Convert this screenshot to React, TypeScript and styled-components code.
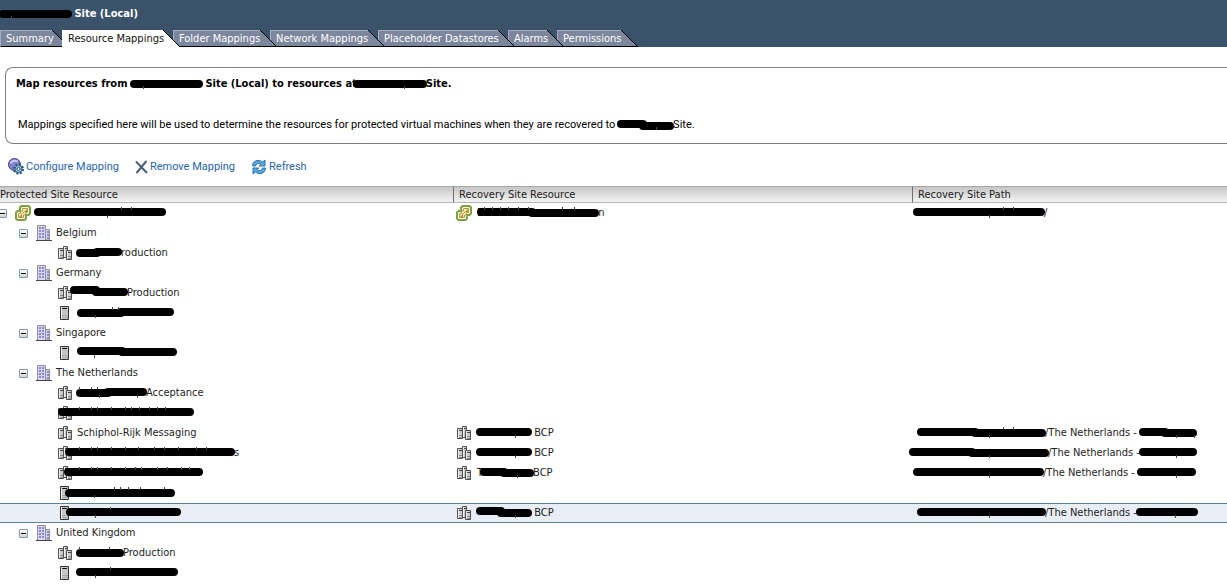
import React from 'react';
import styled, { createGlobalStyle, css } from 'styled-components';

const GlobalStyle = createGlobalStyle`
  * { box-sizing: border-box; }
  body {
    margin: 0;
    background: #fff;
    color: #1c1c1c;
    font-family: 'DejaVu Sans Condensed', Tahoma, 'Noto Sans', sans-serif;
    font-size: 11px;
    line-height: 16px;
    overflow-x: hidden;
  }
`;

const Header = styled.header`
  display: flex;
  flex-direction: column;
  justify-content: space-between;
  height: 47px;
  padding-top: 6px;
  background: #3b526b;
`;

const Title = styled.h1`
  display: flex;
  align-items: center;
  margin: 0;
  color: #fff;
  font-size: 11px;
  font-weight: bold;
  line-height: 16px;
  white-space: pre;
`;

const TabList = styled.nav`
  display: flex;
  height: 17px;
`;

const TabButton = styled.button<{ $width: number; $active?: boolean; $order: number }>`
  position: relative;
  z-index: ${(p) => p.$order};
  display: flex;
  flex: none;
  width: ${(p) => p.$width}px;
  height: 17px;
  margin: 0 10px 0 0;
  padding: 0 0 0 5px;
  border: 0;
  border-top: 1px solid #a4adc0;
  border-left: 1px solid #a4adc0;
  border-bottom: 1px solid #000;
  background: #7c869c;
  color: #fff;
  font: inherit;
  line-height: 15px;
  text-align: left;
  white-space: nowrap;
  ${(p) =>
    p.$active &&
    css`
      border-color: #fff;
      background: #fff;
      color: #111;
    `}
`;

const TabLabel = styled.span`
  position: relative;
  z-index: 1;
`;

const Slope = styled.svg`
  position: absolute;
  top: -1px;
  left: 100%;
`;

const Intro = styled.section`
  margin: 20px 0 0 5px;
  padding: 8px 10px 10px;
  border: 1px solid #808080;
  border-right: 0;
  border-radius: 8px 0 0 8px;
  color: #000;
`;

const IntroTitle = styled.h2`
  display: flex;
  align-items: center;
  margin: 0;
  font-size: 11px;
  line-height: 16px;
  white-space: pre;
`;

const IntroText = styled.p`
  display: flex;
  align-items: center;
  margin: 24px 0 0;
  padding-left: 2px;
  font-family: Roboto, Tahoma, sans-serif;
  line-height: 17px;
  white-space: pre;
`;

const Toolbar = styled.div`
  display: flex;
  gap: 16px;
  height: 42px;
  padding: 3px 8px 0;
  align-items: center;
`;

const Action = styled.button`
  display: flex;
  align-items: center;
  gap: 2px;
  padding: 0;
  border: 0;
  background: none;
  color: #1f66a8;
  font: inherit;
  font-family: Roboto, Tahoma, sans-serif;
`;

const Grid = styled.table`
  width: 100%;
  border-collapse: separate;
  border-spacing: 0;
  table-layout: fixed;
`;

const HeadCell = styled.th<{ $first?: boolean; $width?: string }>`
  width: ${(p) => p.$width ?? 'auto'};
  height: 17px;
  padding: 1px 0 0 ${(p) => (p.$first ? 0 : 5)}px;
  border-top: 1px solid #a8a8a8;
  border-bottom: 1px solid #b4b4b4;
  border-left: ${(p) => (p.$first ? '0' : '1px solid #707070')};
  background: linear-gradient(#c6c6c6, #f4f4f4);
  font-weight: normal;
  line-height: 14px;
  text-align: left;
`;

const Row = styled.tr<{ $selected?: boolean }>`
  ${(p) =>
    p.$selected &&
    css`
      td {
        border-top: 1px solid #5b8597;
        border-bottom: 1px solid #5b8597;
        background: #e9eef6;
      }
    `}
`;

const Cell = styled.td<{ $pad?: number }>`
  height: 20px;
  padding: 0 0 0 ${(p) => p.$pad ?? 0}px;
  line-height: 16px;
`;

const Line = styled.div<{ $indent?: number }>`
  display: flex;
  align-items: center;
  height: 18px;
  margin-left: ${(p) => p.$indent ?? 0}px;
  white-space: pre;
`;

const Label = styled.span<{ $gap: number }>`
  display: flex;
  align-items: center;
  height: 18px;
  margin: 0 0 0 ${(p) => p.$gap}px;
`;

const Toggle = styled.button`
  flex: none;
  width: 9px;
  height: 9px;
  margin-right: 8px;
  padding: 0;
  border: 1px solid #7f9db0;
  border-radius: 1px;
  background: linear-gradient(#000, #000) center / 5px 1px no-repeat, linear-gradient(#fff, #d4d4cc);
`;

const Marker = styled.svg<{ $shift: number }>`
  flex: none;
  margin-left: ${(p) => p.$shift}px;
  overflow: visible;
  z-index: 1;
`;

type BarSpec = { w: number; shift?: number; a?: number; b?: number; up?: number[]; down?: number[] };

/* A hand-drawn black-out stroke: two thick segments, each with its own height. */
function Bar({ w, shift = 0, a = 5, b = 5, up = [], down = [] }: BarSpec) {
  const mid = Math.round(w * 0.45);
  return (
    <Marker $shift={shift} width={w} height="12" viewBox={`0 0 ${w} 12`} aria-label="redacted">
      <path d={`M3 ${a}H${mid}M${mid} ${b}H${w - 3}`} stroke="#000" strokeWidth="8" strokeLinecap="round" />
      <path
        d={up.map((x) => `M${x + 0.5} 0v3`).join('') + down.map((x) => `M${x + 0.5} 8v3`).join('')}
        stroke="#444"
        fill="none"
      />
    </Marker>
  );
}

type Part = string | BarSpec;

function Parts({ items }: { items: Part[] }) {
  return (
    <>
      {items.map((item, i) => (typeof item === 'string' ? <span key={i}>{item}</span> : <Bar key={i} {...item} />))}
    </>
  );
}

const Icon = styled.svg`
  flex: none;
`;

function VCenterIcon() {
  return (
    <Icon width="16" height="16" viewBox="0 0 16 16">
      <path d="M6.500 1h7L15 2.500v6L13.500 10H11v3.500L9.500 15h-7L1 13.500v-6L2.500 6H5V2.500z" fill="#fffcd6" stroke="#7fa044" strokeWidth="2" strokeLinejoin="round" />
      <path d="M7.500 3.500h5v4h-2v2.500h-2v2.500h-5v-4h2V6h2z" fill="#f8ecae" stroke="#a59c58" />
      <path d="M9 7l3-3v3zM4 12l3-3v3z" fill="#c8862a" />
      <path d="M6.500 9.500l3-3" stroke="#c8862a" />
    </Icon>
  );
}

function DatacenterIcon() {
  return (
    <Icon width="16" height="16" viewBox="0 0 16 16">
      <path d="M1.500 15V.5h8V15" fill="#d6d6f2" stroke="#909090" />
      <path d="M9.500 4.500h4V15h-4z" fill="#d6d6f2" stroke="#909090" />
      <path d="M3 2h2v2H3zM6 2h2v2H6zM3 5h2v2H3zM6 5h2v2H6zM3 8h2v2H3zM6 8h2v2H6zM3 11h2v2H3zM6 11h2v2H6zM11 6h2v2h-2zM11 9h2v2h-2zM11 12h2v2h-2z" fill="#8a8acb" />
      <path d="M0 15.500h16" stroke="#444" />
    </Icon>
  );
}

function ClusterIcon() {
  return (
    <Icon width="16" height="16" viewBox="0 0 16 16">
      <g fill="#cdcdcd" stroke="#505050">
        <path d="M6.500 1.500h4v11h-4z" />
        <path d="M1.500 3.500h5v10h-5z" />
        <path d="M9.500 5.500h5v9h-5z" />
      </g>
      <path d="M3 5.500h3M8 3.500h2M11 7.500h3" stroke="#444" />
      <path d="M2.500 4v9M7.500 2v10M10.500 6v8" stroke="#f0f0f0" />
      <path d="M3 10.500h3M3 12.500h3M11 11.500h3M11 13.500h3" stroke="#8a8a8a" />
    </Icon>
  );
}

function HostIcon() {
  return (
    <Icon width="16" height="16" viewBox="0 0 16 16">
      <path d="M3.500 1.500h8v13h-8z" fill="#c6c6c6" stroke="#333" />
      <path d="M5 3.500h5" stroke="#111" />
      <path d="M5 10.500h6M5 12.500h6" stroke="#aaa" />
      <path d="M4.500 2v12" stroke="#f2f2f2" />
    </Icon>
  );
}

const icons = { vcenter: VCenterIcon, datacenter: DatacenterIcon, cluster: ClusterIcon, host: HostIcon };

function ConfigureIcon() {
  return (
    <svg width="16" height="17" viewBox="0 0 16 17">
      <circle cx="6.500" cy="6.500" r="6" fill="#8583c9" stroke="#3d3c7c" />
      <path d="M2.500 5.500a4.500 3.500 0 0 1 7-2" stroke="#c9c8f2" strokeWidth="2" fill="none" />
      <circle cx="10.500" cy="11" r="4.500" fill="#9fcbe6" stroke="#1f4d70" strokeWidth="2" strokeDasharray="2 1.500" />
      <circle cx="10.500" cy="11" r="3.500" fill="#9fcbe6" stroke="#2f6488" />
      <circle cx="10.500" cy="11" r="1.500" fill="#fff" stroke="#1f4d70" />
    </svg>
  );
}

function RemoveIcon() {
  return (
    <svg width="13" height="14" viewBox="0 0 13 14">
      <path d="M1.500 2l10 10.500M11 1.500l-9 11" stroke="#4b6076" strokeWidth="2" strokeLinecap="round" />
    </svg>
  );
}

function RefreshIcon() {
  return (
    <svg width="16" height="16" viewBox="0 0 16 16">
      <path d="M1.500 7C1.500 3.500 4 1.500 7 1.500c2 0 3.500.5 4.500 1.500L14 1v6H8l1.800-1.800C8.500 4 5.500 4 4.500 7z" fill="#5ba6dc" stroke="#2a74b2" strokeLinejoin="round" />
      <path d="M14.500 9c0 3.500-2.500 5.500-5.500 5.500-2 0-3.500-.5-4.500-1.500L2 15V9h6l-1.800 1.800c1.300 1.200 4.300 1.200 5.300-1.800z" fill="#5ba6dc" stroke="#2a74b2" strokeLinejoin="round" />
    </svg>
  );
}

const tabs = [
  { label: 'Summary', width: 52 },
  { label: 'Resource Mappings', width: 101, active: true },
  { label: 'Folder Mappings', width: 87 },
  { label: 'Network Mappings', width: 98 },
  { label: 'Placeholder Datastores', width: 120 },
  { label: 'Alarms', width: 39 },
  { label: 'Permissions', width: 64 },
];

type Kind = keyof typeof icons;
type RowSpec = {
  kind: Kind;
  name: Part[];
  target?: Part[];
  path?: Part[];
  selected?: boolean;
};

const netherlands = '/The Netherlands - ';

const rows: RowSpec[] = [
  {
    kind: 'vcenter',
    name: [{ w: 130, down: [72], up: [86, 96] }],
    target: ['E', { w: 120, shift: -5, b: 6, up: [6, 14, 22, 30, 40, 50, 84, 96] }, 'n'],
    path: [{ w: 130, shift: -4, down: [75], up: [89, 99] }, '/'],
  },
  { kind: 'datacenter', name: ['Belgium'] },
  { kind: 'cluster', name: [{ w: 44, a: 6, b: 5 }, 'roduction'] },
  { kind: 'datacenter', name: ['Germany'] },
  { kind: 'cluster', name: [{ w: 56, shift: -6, a: 3, b: 5 }, 'Production'] },
  { kind: 'host', name: [{ w: 95, shift: 1, a: 6, b: 5, up: [34, 40], down: [17] }] },
  { kind: 'datacenter', name: ['Singapore'] },
  { kind: 'host', name: [{ w: 98, shift: 1, a: 4, b: 5, down: [16] }] },
  { kind: 'datacenter', name: ['The Netherlands'] },
  { kind: 'cluster', name: [{ w: 69, a: 6, b: 5, up: [2, 14, 20], down: [22, 60] }, 'Acceptance'] },
  { kind: 'cluster', name: [{ w: 134, shift: -18, up: [20, 32, 38, 52, 66, 72, 80, 90, 98, 106] }] },
  {
    kind: 'cluster',
    name: ['Schiphol-Rijk Messaging'],
    target: [{ w: 54, down: [38] }, ' BCP'],
    path: [{ w: 127, a: 5, b: 6, down: [71], up: [85, 95] }, netherlands, { w: 56, b: 6, down: [36, 54] }],
  },
  {
    kind: 'cluster',
    name: [{ w: 168, shift: -11, up: [13, 25, 31, 45, 59, 72, 88, 98, 112, 130, 140] }, 's'],
    target: [{ w: 54, down: [38] }, ' BCP'],
    path: [{ w: 138, shift: -8, b: 6, down: [79] }, netherlands, { w: 56, shift: -3, down: [36] }],
  },
  {
    kind: 'cluster',
    name: [{ w: 137, shift: -12, up: [14, 26, 32, 46, 60, 70, 76, 92, 102, 116, 124] }],
    target: ['T', { w: 52, shift: -2, b: 6, down: [36] }, 'BCP'],
    path: [{ w: 129, shift: -4, down: [75] }, netherlands, { w: 57, down: [38] }],
  },
  { kind: 'host', name: [{ w: 108, shift: -11, a: 6, b: 6, up: [48, 54, 62, 74, 98], down: [28] }] },
  {
    kind: 'host',
    name: [{ w: 113, shift: -10, up: [43], down: [28] }],
    target: [{ w: 54, a: 4, b: 6, down: [38] }, ' BCP'],
    path: [{ w: 127, down: [71] }, netherlands, { w: 60, shift: -3, down: [38] }],
    selected: true,
  },
  { kind: 'datacenter', name: ['United Kingdom'] },
  { kind: 'cluster', name: [{ w: 46, a: 6, b: 6, up: [2, 32] }, 'Production'] },
  { kind: 'host', name: [{ w: 100, up: [33], down: [18] }] },
];

const indents: Record<Kind, number> = { vcenter: -2, datacenter: 19, cluster: 57, host: 57 };

function Tab({ label, width, active, order }: { label: string; width: number; active?: boolean; order: number }) {
  return (
    <TabButton $width={width} $active={active} $order={order} aria-current={active ? 'page' : undefined}>
      <TabLabel>{label}</TabLabel>
      <Slope width="17" height="17" viewBox="0 0 17 17">
        <path d="M0 0L17 17H0z" fill={active ? '#fff' : '#7c869c'} />
        <path d={active ? 'M0 0L17 17' : 'M0 0L17 17M0 16.500H17'} stroke="#000" />
      </Slope>
    </TabButton>
  );
}

export default function App() {
  return (
    <>
      <GlobalStyle />
      <Header>
        <Title>
          <Bar w={71} down={[11]} a={6} b={6} /> Site (Local)
        </Title>
        <TabList>
          {tabs.map((tab, i) => (
            <Tab key={tab.label} {...tab} order={tab.active ? 20 : 10 - i} />
          ))}
        </TabList>
      </Header>
      <main>
        <Intro>
          <IntroTitle>
            <Parts
              items={[
                'Map resources from ',
                { w: 71, a: 6, b: 6, down: [12] },
                ' Site (Local) to resources at',
                { w: 72, shift: -3, a: 6, b: 6, down: [50] },
                'Site.',
              ]}
            />
          </IntroTitle>
          <IntroText>
            <Parts
              items={[
                'Mappings specified here will be used to determine the resources for protected virtual machines when they are recovered to ',
                { w: 55, a: 5, b: 7, down: [38] },
                'Site.',
              ]}
            />
          </IntroText>
        </Intro>
        <Toolbar>
          <Action>
            <ConfigureIcon />
            Configure Mapping
          </Action>
          <Action>
            <RemoveIcon />
            Remove Mapping
          </Action>
          <Action>
            <RefreshIcon />
            Refresh
          </Action>
        </Toolbar>
        <Grid>
          <thead>
            <tr>
              <HeadCell $first $width="453px">Protected Site Resource</HeadCell>
              <HeadCell $width="459px">Recovery Site Resource</HeadCell>
              <HeadCell>Recovery Site Path</HeadCell>
            </tr>
          </thead>
          <tbody>
            {rows.map((row, i) => {
              const RowIcon = icons[row.kind];
              const TargetIcon = row.kind === 'vcenter' ? VCenterIcon : ClusterIcon;
              const parent = row.kind === 'vcenter' || row.kind === 'datacenter';
              return (
                <Row key={i} $selected={row.selected}>
                  <Cell>
                    <Line $indent={indents[row.kind]}>
                      {parent && <Toggle aria-label="Collapse" />}
                      <RowIcon />
                      <Label $gap={4}>
                        <Parts items={row.name} />
                      </Label>
                    </Line>
                  </Cell>
                  <Cell $pad={3}>
                    {row.target && (
                      <Line>
                        <TargetIcon />
                        <Label $gap={5}>
                          <Parts items={row.target} />
                        </Label>
                      </Line>
                    )}
                  </Cell>
                  <Cell $pad={6}>
                    {row.path && (
                      <Line>
                        <Label $gap={0}>
                          <Parts items={row.path} />
                        </Label>
                      </Line>
                    )}
                  </Cell>
                </Row>
              );
            })}
          </tbody>
        </Grid>
      </main>
    </>
  );
}
